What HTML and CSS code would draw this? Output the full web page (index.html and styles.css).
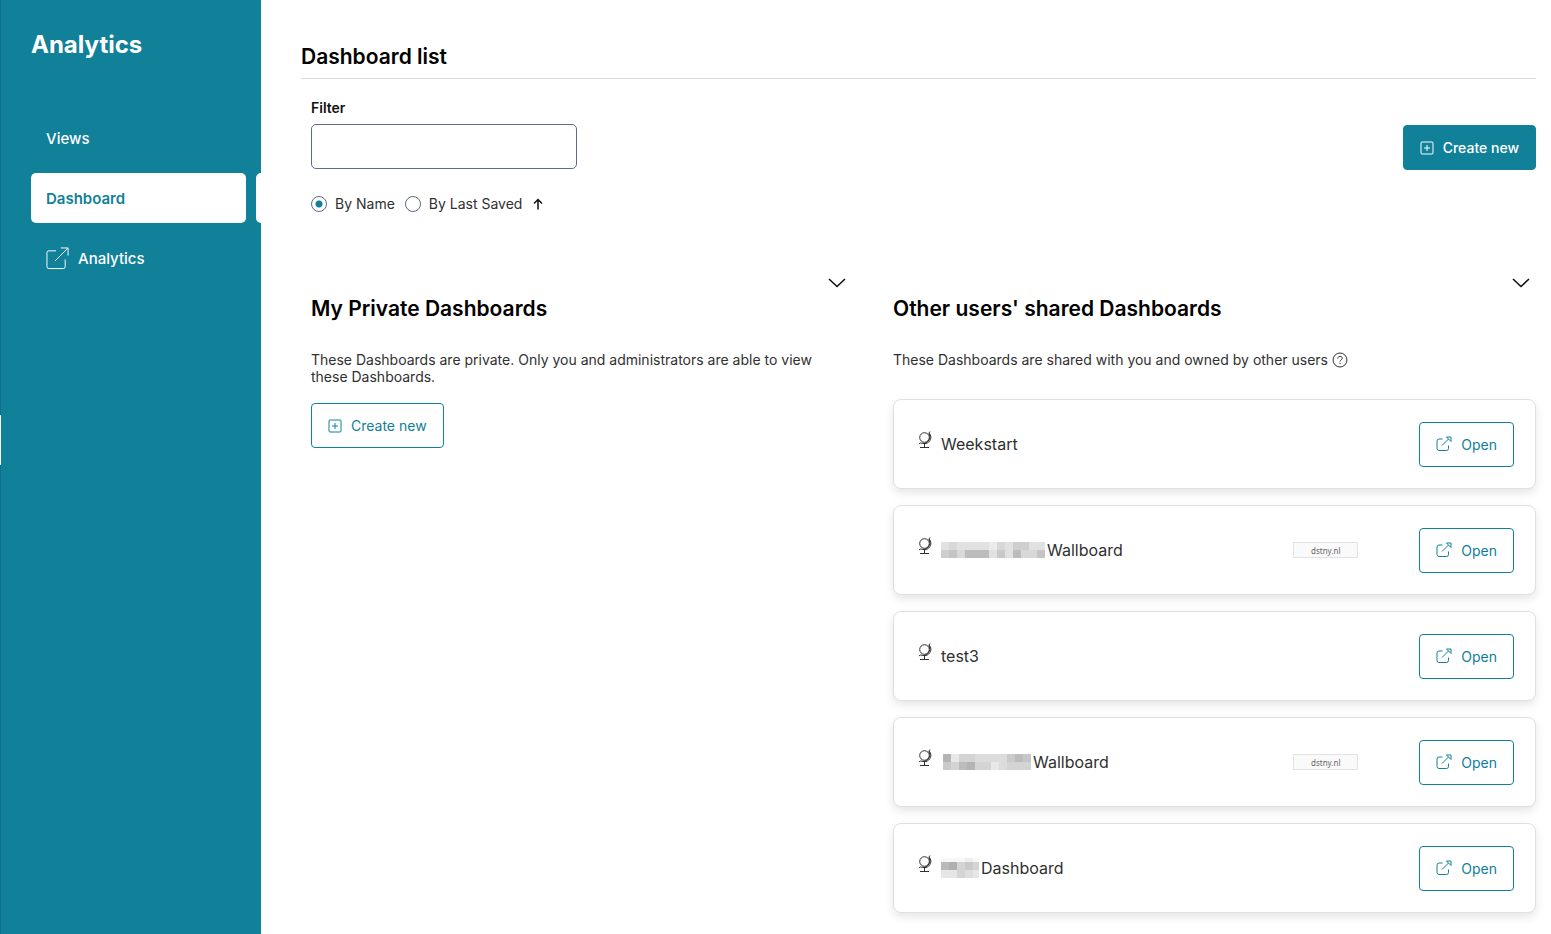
FILE: index.html
```html
<!DOCTYPE html>
<html lang="en">
<head>
<meta charset="utf-8">
<title>Dashboard list</title>
<link rel="stylesheet" href="styles.css">
</head>
<body>
<svg class="defs" aria-hidden="true">
  <symbol id="i-open" viewBox="0 0 24 24"><path d="M10.5 4H3a2 2 0 0 0-2 2v14.5a2 2 0 0 0 2 2h15a2 2 0 0 0 2-2V13M15.500 1H23v8M23 1 9.500 14.500"/></symbol>
  <symbol id="i-open-small" viewBox="0 0 16 16"><path d="M6.500 3H3a2 2 0 0 0-2 2v7.500a2 2 0 0 0 2 2h7.500a2 2 0 0 0 2-2V9.500M6 9.500l6.500-6.500M10.500 1h4.500v4.500z"/></symbol>
  <symbol id="i-plus" viewBox="0 0 14 14"><rect x="1" y="1" width="12" height="12" rx="1"/><path d="M7 4v6M4 7h6"/></symbol>
  <symbol id="i-chevron" viewBox="0 0 18 10"><path d="m1 1 8 7.500L17 1"/></symbol>
  <symbol id="i-globe" viewBox="0 0 14 18"><circle cx="6.500" cy="6.500" r="4.800"/><path d="M12 .5 11 2a7 7 0 0 1-8.800 10L1 13M11 2c4 4 1 9.500-3 10.500H5M6.500 12.800v3.200M2 16.500h9"/></symbol>
</svg>
<div class="app">
  <nav class="sidebar">
    <h1 class="brand">Analytics</h1>
    <a class="nav-item" href="#views">Views</a>
    <a class="nav-item active" href="#dashboard" aria-current="page">Dashboard</a>
    <a class="nav-item" href="#analytics"><svg class="nav-icon"><use href="#i-open"/></svg>Analytics</a>
  </nav>
  <main class="main">
    <h2 class="title">Dashboard list</h2>
    <div class="toolbar">
      <form class="filter">
        <label class="filter-label" for="filter">Filter</label>
        <input class="filter-input" id="filter" type="text">
        <div class="sort">
          <label class="option"><input class="radio" type="radio" name="sort" checked>By Name</label>
          <label class="option"><input class="radio" type="radio" name="sort">By Last Saved</label>
          <button class="sort-dir" type="button" aria-label="Sort ascending"><svg width="12" height="12" viewBox="0 0 12 12"><path d="M6 11.500V1.500M2 5.500l4-4 4 4"/></svg></button>
        </div>
      </form>
      <button class="btn primary" type="button"><svg class="plus"><use href="#i-plus"/></svg>Create new</button>
    </div>
    <div class="columns">
      <section class="column">
        <button class="collapse" type="button" aria-label="Collapse"><svg class="chevron"><use href="#i-chevron"/></svg></button>
        <h3 class="heading">My Private Dashboards</h3>
        <p class="description">These Dashboards are private. Only you and administrators are able to view these Dashboards.</p>
        <button class="btn" type="button"><svg class="plus"><use href="#i-plus"/></svg>Create new</button>
      </section>
      <section class="column">
        <button class="collapse" type="button" aria-label="Collapse"><svg class="chevron"><use href="#i-chevron"/></svg></button>
        <h3 class="heading">Other users' shared Dashboards</h3>
        <p class="description">These Dashboards are shared with you and owned by other users <svg class="help" viewBox="0 0 16 16"><circle cx="8" cy="8" r="7"/><path d="M5.800 6.500C5.800 3.500 10.300 3.700 10.300 6.300 10.300 7.800 8 7.900 8 9.500M8 10.800v1.200"/></svg></p>
        <div class="cards">
          <article class="card">
            <svg class="globe"><use href="#i-globe"/></svg>
            <span class="name">Weekstart</span>
            <button class="btn" type="button"><svg class="open"><use href="#i-open-small"/></svg>Open</button>
          </article>
          <article class="card">
            <svg class="globe"><use href="#i-globe"/></svg>
            <span class="name"><svg class="mosaic" width="104" height="16" viewBox="0 0 13 2">
              <path fill="#e1e1e1" d="M0 0h13v2H0z"/><path fill="#d8d8d8" d="M1 0h1v1H1zM7 0h1v1H7zM2 1h1v1H2zM10 1h2v1h-2z"/><path fill="#ebebeb" d="M6 0h1v1H6z"/><path fill="#cecece" d="M9 0h2v1H9zM0 1h1v1H0zM7 1h1v1H7z"/><path fill="#c4c4c4" d="M1 1h1v1H1zM8 1h0zM12 1h1v1h-1z"/><path fill="#bcbcbc" d="M3 1h3v1H3zM9 1h1v1H9z"/><path fill="#c9c9c9" d="M7 1h1v1H7z"/>
            </svg>Wallboard</span>
            <span class="tag">dstny.nl</span>
            <button class="btn" type="button"><svg class="open"><use href="#i-open-small"/></svg>Open</button>
          </article>
          <article class="card">
            <svg class="globe"><use href="#i-globe"/></svg>
            <span class="name">test3</span>
            <button class="btn" type="button"><svg class="open"><use href="#i-open-small"/></svg>Open</button>
          </article>
          <article class="card">
            <svg class="globe"><use href="#i-globe"/></svg>
            <span class="name"><svg class="mosaic" width="90" height="16" viewBox="0 0 90 16">
              <path fill="#d4d4d4" d="M2 0h88v16H2z"/><path fill="#b4b4b4" d="M2 0h8v8H2zM26 8h8v8h-8z"/><path fill="#e8e8e8" d="M10 0h8v8h-8zM50 8h8v8h-8z"/><path fill="#dcdcdc" d="M34 0h32v8H34zM58 8h8v8h-8z"/><path fill="#cacaca" d="M66 0h8v8h-8zM2 8h8v8H2z"/><path fill="#bcbcbc" d="M74 0h8v8h-8zM18 8h8v8h-8z"/><path fill="#c6c6c6" d="M82 0h8v8h-8z"/>
            </svg>Wallboard</span>
            <span class="tag">dstny.nl</span>
            <button class="btn" type="button"><svg class="open"><use href="#i-open-small"/></svg>Open</button>
          </article>
          <article class="card">
            <svg class="globe"><use href="#i-globe"/></svg>
            <span class="name"><svg class="mosaic" width="38" height="20" viewBox="0 0 38 20">
              <path fill="#f7f7f7" d="M0 0h38v20H0z"/><path fill="#eee" d="M24 0h8v4h-8z"/><path fill="#b9b9b9" d="M0 4h8v8H0z"/><path fill="#b0b0b0" d="M8 4h8v8H8z"/><path fill="#d4d4d4" d="M16 4h8v16h-8zM32 4h6v8h-6z"/><path fill="#c9c9c9" d="M24 4h8v8h-8z"/><path fill="#e6e6e6" d="M0 12h16v8H0zM32 12h6v8h-6z"/><path fill="#dedede" d="M24 12h8v8h-8z"/>
            </svg>Dashboard</span>
            <button class="btn" type="button"><svg class="open"><use href="#i-open-small"/></svg>Open</button>
          </article>
        </div>
      </section>
    </div>
  </main>
</div>
</body>
</html>
```
FILE: styles.css
```css
* { box-sizing: border-box; }
body { margin: 0; background: #fff; color: #303030; font: 14px/17px Inter, "Liberation Sans", sans-serif; }
button, input { font: inherit; }
svg { flex: none; fill: none; stroke: currentColor; }
.defs { position: absolute; width: 0; height: 0; }
.app { display: flex; min-height: 100vh; }

.sidebar { position: relative; flex: none; width: 261px; padding: 30px 15px 0 31px; background: #118099; border-left: 1px solid #0d708a; padding-left: 30px; }
.sidebar::before { content: ""; position: absolute; left: -1px; top: 415px; width: 1px; height: 50px; background: #fff; }
.brand { margin: 0 0 53px; color: #fff; font-size: 24px; line-height: 30px; font-weight: 700; }
.nav-item { position: relative; display: flex; align-items: center; gap: 9px; height: 50px; margin-bottom: 10px; padding: 0 15px; border-radius: 5px; color: #fff; font-size: 15px; font-weight: 500; text-decoration: none; }
.nav-item.active { background: #fff; color: #118099; font-weight: 600; }
.nav-item.active::after { content: ""; position: absolute; right: -15px; top: 0; width: 5px; height: 50px; border-radius: 5px 0 0 5px; background: #fff; }
.nav-icon { width: 23px; height: 23px; }

.main { flex: 1; min-width: 0; padding: 44px 15px 21px 40px; }
.title { margin: 0; padding-bottom: 9px; border-bottom: 1px solid #d8d8d8; color: #000; font-size: 21px; line-height: 25px; font-weight: 600; }
.toolbar { display: flex; justify-content: space-between; align-items: flex-start; padding: 20px 0 0 10px; }
.toolbar .btn { margin-top: 26px; }
.filter { width: 266px; }
.filter-label { display: block; margin-bottom: 8px; color: #111; font-weight: 600; }
.filter-input { display: block; width: 100%; height: 45px; padding: 0 12px; border: 1px solid #5f6a8a; border-radius: 5px; background: #fff; }
.sort { display: flex; align-items: center; gap: 10px; margin-top: 26px; white-space: nowrap; }
.option { display: flex; align-items: center; gap: 8px; }
.radio { appearance: none; width: 16px; height: 16px; margin: 0; border: 1px solid #5f6a8a; border-radius: 50%; background: #fff; }
.radio:checked { background: radial-gradient(circle, #118099 3px, #fff 4px); }
.sort-dir { display: flex; padding: 0; border: 0; background: none; color: #111; }
.sort-dir svg { stroke-width: 1.500; }

.columns { display: grid; grid-template-columns: 541fr 643fr; gap: 41px; padding: 61px 0 0 10px; }
.column { display: flex; flex-direction: column; align-items: flex-start; min-width: 0; }
.collapse { display: flex; align-self: flex-end; margin-right: 6px; padding: 5px 0; border: 0; background: none; color: #111; }
.chevron { width: 18px; height: 10px; stroke-width: 1.600; }
.heading { margin: 0 0 30px; padding-top: 3px; color: #000; font-size: 21px; line-height: 25px; font-weight: 600; }
.description { margin: 0 0 18px; }
.help { width: 16px; height: 16px; vertical-align: -3px; }
.btn { display: flex; align-items: center; flex: none; height: 45px; padding: 0 16px; border: 1px solid #118099; border-radius: 4px; background: #fff; color: #118099; }
.btn.primary { background: #118099; color: #fff; font-weight: 500; }
.plus { width: 14px; height: 14px; margin-right: 9px; }
.open { width: 16px; height: 16px; margin-right: 9px; }

.cards { display: grid; gap: 16px; align-self: stretch; padding-top: 14px; }
.description + .cards { margin-top: -1px; }
.card { display: flex; align-items: center; height: 90px; padding: 0 21px 0 24px; border: 1px solid #e0e0e0; border-radius: 8px; background: #fff; box-shadow: 0 4px 10px rgba(0, 0, 0, .1); }
.globe { width: 14px; height: 18px; margin: 0 9px 9px 0; }
.name { display: flex; align-items: center; flex: 1; gap: 2px; font-size: 16px; line-height: 20px; }
.mosaic { stroke: none; shape-rendering: crispEdges; }
.tag { width: 65px; height: 16px; margin-right: 61px; border: 1px solid #e2e2e2; background: #fafafa; color: #666; font: 8px/15px "Noto Sans", sans-serif; text-align: center; }
```
